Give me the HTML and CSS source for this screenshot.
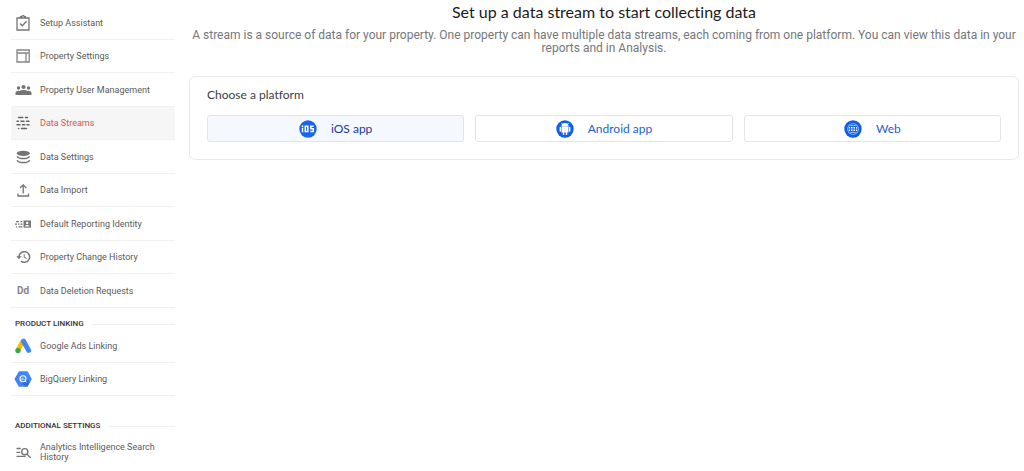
FILE: index.html
```html
<!DOCTYPE html>
<html lang="en">
<head>
<meta charset="utf-8">
<title>Data Streams</title>
<link rel="stylesheet" href="styles.css">
</head>
<body>
<div class="layout">
  <nav class="sidebar" aria-label="Property">
    <ul class="menu">
      <li><a class="item" href="#"><svg class="icon" viewBox="0 0 18 18"><path fill="none" stroke="#757575" stroke-width="1.3" d="M3 4h12v12H3zM6.5 4V2.6h1.2a1.4 1.4 0 0 1 2.600 0h1.200V4M6 9.500l2.300 2.300 4.300-4.600"/></svg>Setup Assistant</a></li>
      <li><a class="item" href="#"><svg class="icon" viewBox="0 0 18 18"><path fill="none" stroke="#858585" stroke-width="1.300" d="M3 3h12.200v12H3zM3 6h12.200M12 6v9"/></svg>Property Settings</a></li>
      <li><a class="item" href="#"><svg class="icon" viewBox="0 0 18 18"><g fill="#757575"><circle cx="4.500" cy="7" r="1.700"/><circle cx="9.500" cy="6" r="2.100"/><circle cx="14.500" cy="7" r="1.700"/><path d="M1.500 14v-2.200c0-1.600 2.400-2.300 4-1.900 2-1.200 6-1.200 8 0 1.700-.4 4 .3 4 1.900V14z"/></g></svg>Property User Management</a></li>
      <li><a class="item active" href="#" aria-current="page"><svg class="icon" viewBox="0 0 18 18"><path fill="none" stroke="#666" stroke-width="1.500" stroke-linecap="round" d="M4.500 3.500h4.300M11.500 3.500h2M3 7.200h1.500M7 7.200h3M12.500 7.200H15M3 10.800h3M8.500 10.800h2.200M13 10.800h2M4.500 14.500h.2M7.500 14.500h5"/></svg>Data Streams</a></li>
      <li><a class="item" href="#"><svg class="icon" viewBox="0 0 18 18"><ellipse cx="9.300" cy="5.300" rx="6.500" ry="2.600" fill="#757575"/><path fill="none" stroke="#757575" stroke-width="1.500" d="M3 8.200c1.500 3.200 11.100 3.200 12.600 0M3 12.200c1.500 3.200 11.100 3.200 12.600 0"/></svg>Data Settings</a></li>
      <li><a class="item" href="#"><svg class="icon" viewBox="0 0 18 18"><path fill="none" stroke="#757575" stroke-width="1.300" d="M9.200 12.500V4M6 7l3.200-3.200L12.400 7M4 12.500V15h10.500v-2.500"/></svg>Data Import</a></li>
      <li><a class="item" href="#"><svg class="icon" viewBox="0 0 18 18"><path fill="none" stroke="#777" stroke-width="1.200" d="M2 6.600h3M6.500 6.600h1.800M1 9.200h2M4 9.200h1.500M6.500 9.200h2M2 11.800h1M4.500 11.800h3.800"/><path fill="#777" d="M9.500 5.500H17v7.200H9.500z"/><circle cx="13.200" cy="8" r="1.200" fill="#fff"/><path fill="#fff" d="M10.800 11.600c.4-2.200 4.400-2.200 4.800 0z"/></svg>Default Reporting Identity</a></li>
      <li><a class="item" href="#"><svg class="icon" viewBox="0 0 18 18"><path fill="none" stroke="#777" stroke-width="1.500" d="M5 9a5.300 5.300 0 1 1 2 4.100"/><path fill="#777" d="M2.200 8.200h5.400L4.900 11.200z"/><path fill="none" stroke="#888" stroke-width="1.100" d="M10.200 6v3.200l2.500 1.300"/></svg>Property Change History</a></li>
      <li><a class="item" href="#"><span class="icon letters" aria-hidden="true">Dd</span>Data Deletion Requests</a></li>
    </ul>
    <h2 class="section">PRODUCT LINKING</h2>
    <ul class="menu linking">
      <li><a class="item" href="#"><svg class="icon" viewBox="0 0 18 18"><path fill="none" stroke="#fbbc04" stroke-width="4.800" d="M9.300 3.500L4 13"/><path fill="none" stroke="#4285f4" stroke-width="5" stroke-linecap="round" d="M9.600 4.200l5 9.200"/><circle cx="4" cy="13.600" r="2.700" fill="#34a853"/></svg>Google Ads Linking</a></li>
      <li><a class="item" href="#"><svg class="icon" viewBox="0 0 18 18"><path fill="#4285f4" stroke="#4285f4" stroke-width="1.500" stroke-linejoin="round" d="M5.300 2h7.900L17 9.100 13.200 16H5.300L1.300 9.100z"/><path fill="#3569d5" d="M7 12l3.800 4.500H13l2.700-4-3.500-4z"/><circle cx="9" cy="8.800" r="3" fill="none" stroke="#fff" stroke-width="1.100"/><path fill="none" stroke="#fff" stroke-width=".8" d="M7.800 8.600v1.200M9 7.800v2.300M10.200 9v.8M11.200 11l1.500 1.500"/></svg>BigQuery Linking</a></li>
    </ul>
    <h2 class="section additional">ADDITIONAL SETTINGS</h2>
    <ul class="menu">
      <li><a class="item" href="#"><svg class="icon" viewBox="0 0 18 18"><path fill="none" stroke="#757575" stroke-width="1.300" d="M2.500 5.500h4.200M2.500 9.300h3.800M2.500 13.300h9M13 11.200l3.800 3.700"/><circle cx="10.800" cy="8.700" r="3.100" fill="none" stroke="#757575" stroke-width="1.400"/></svg>Analytics Intelligence Search History</a></li>
    </ul>
  </nav>
  <main class="content">
    <h1 class="title">Set up a data stream to start collecting data</h1>
    <p class="intro">A stream is a source of data for your property. One property can have multiple data streams, each coming from one platform. You can view this data in your reports and in Analysis.</p>
    <section class="card" aria-labelledby="platform">
      <h2 class="card-title" id="platform">Choose a platform</h2>
      <div class="platforms">
        <button class="platform selected" type="button"><svg class="badge" viewBox="0 0 18 18"><circle cx="9" cy="9" r="8.700" fill="#1a66e8"/><g fill="none" stroke="#fff" stroke-width="1.500"><path d="M3.500 7.800v4.500M3.500 5.500v1.400M6.300 6.300h2.500v5.300H6.300zM14.600 6.300h-2.800v2.500h2.500v2.800h-3"/></g></svg>iOS app</button>
        <button class="platform" type="button"><svg class="badge" viewBox="0 0 18 18"><circle cx="9" cy="9" r="8.700" fill="#0f5ee6"/><path stroke="#fff" d="M6.500 4.500L5.500 3M11.500 4.500l1-1.500"/><path fill="#fff" d="M5.500 6.300a3.500 3.200 0 0 1 7 0zM5.500 6.600h7v6h-1.300v2.300H9.800v-2.300H8.200v2.300H6.800v-2.300H5.500z"/><path fill="none" stroke="#fff" stroke-width="1.400" stroke-linecap="round" d="M4.300 7.500v3.600M13.700 7.500v3.600"/><path stroke="#bfd0fb" stroke-width=".7" d="M5.500 6.600h7"/></svg>Android app</button>
        <button class="platform" type="button"><svg class="badge" viewBox="0 0 18 18"><circle cx="9" cy="9" r="8.700" fill="#0f5ee6"/><circle cx="9" cy="9" r="5.700" fill="#fff"/><g fill="none" stroke="#0f5ee6" stroke-width=".9"><circle cx="9" cy="9" r="4.900"/><path d="M4 9h10M5 6.500h8M5 11.500h8M9 4v10"/><ellipse cx="9" cy="9" rx="2.600" ry="4.900"/></g></svg>Web</button>
      </div>
    </section>
  </main>
</div>
</body>
</html>
```

FILE: styles.css
```css
* { box-sizing: border-box; }

body {
  margin: 0;
  background: #fff;
  color: #505050;
  font-family: Roboto, "Liberation Sans", sans-serif;
}

h1, h2, p, ul { margin: 0; padding: 0; }

.layout {
  display: grid;
  grid-template-columns: 164px 1fr;
  column-gap: 14px;
  padding: 4px 5px 0 11px;
}

.sidebar { padding-top: 2px; }

.menu { list-style: none; }

.item {
  display: flex;
  align-items: center;
  gap: 8px;
  height: 34px;
  padding-left: 3px;
  border-bottom: 1px solid #f1f1f1;
  color: #5a5a5a;
  font-size: 9px;
  line-height: 10px;
  text-decoration: none;
}

.menu li:nth-child(even) .item { height: 33px; }

.item.active {
  background: #f6f6f6;
  color: #e0524c;
}

.icon {
  flex: none;
  width: 18px;
  height: 18px;
}

.letters {
  color: #858585;
  font-size: 10px;
  font-weight: 700;
  line-height: 18px;
  text-align: center;
}

.section {
  display: flex;
  align-items: center;
  gap: 8px;
  padding: 11px 0 0 4px;
  color: #333;
  font-size: 8px;
  font-weight: 500;
  line-height: 10px;
}

.section::after {
  content: "";
  flex: 1;
  border-top: 1px solid #f1f1f1;
}

.section.additional { padding-top: 25px; }

.additional + .menu .item {
  height: 42px;
  border-bottom: 0;
}

.title {
  color: #1b1b1b;
  font-family: Lato, sans-serif;
  font-size: 16px;
  font-weight: 400;
  font-variant-ligatures: none;
  line-height: 16px;
  text-align: center;
}

.intro {
  padding-top: 9px;
  color: #74777b;
  font-size: 12px;
  line-height: 13px;
  text-align: center;
}

.card {
  margin-top: 21px;
  padding: 11px 17px 17px;
  border: 1px solid #e8e8e8;
  border-radius: 6px;
}

.card-title {
  color: #3c4043;
  font-family: Lato, sans-serif;
  font-size: 12px;
  font-weight: 400;
  font-variant-ligatures: none;
  line-height: 14px;
}

.platforms {
  display: grid;
  grid-template-columns: repeat(3, 1fr);
  gap: 11px;
  margin-top: 13px;
}

.platform {
  display: flex;
  align-items: center;
  justify-content: center;
  gap: 14px;
  height: 27px;
  padding: 0;
  border: 1px solid #e2e4e8;
  border-radius: 3px;
  background: #fff;
  color: #1a62d8;
  font-family: Lato, sans-serif;
  font-size: 12px;
}

.platform.selected {
  background: #f5f9ff;
  color: #173a9a;
}

.badge {
  width: 18px;
  height: 18px;
}
```
